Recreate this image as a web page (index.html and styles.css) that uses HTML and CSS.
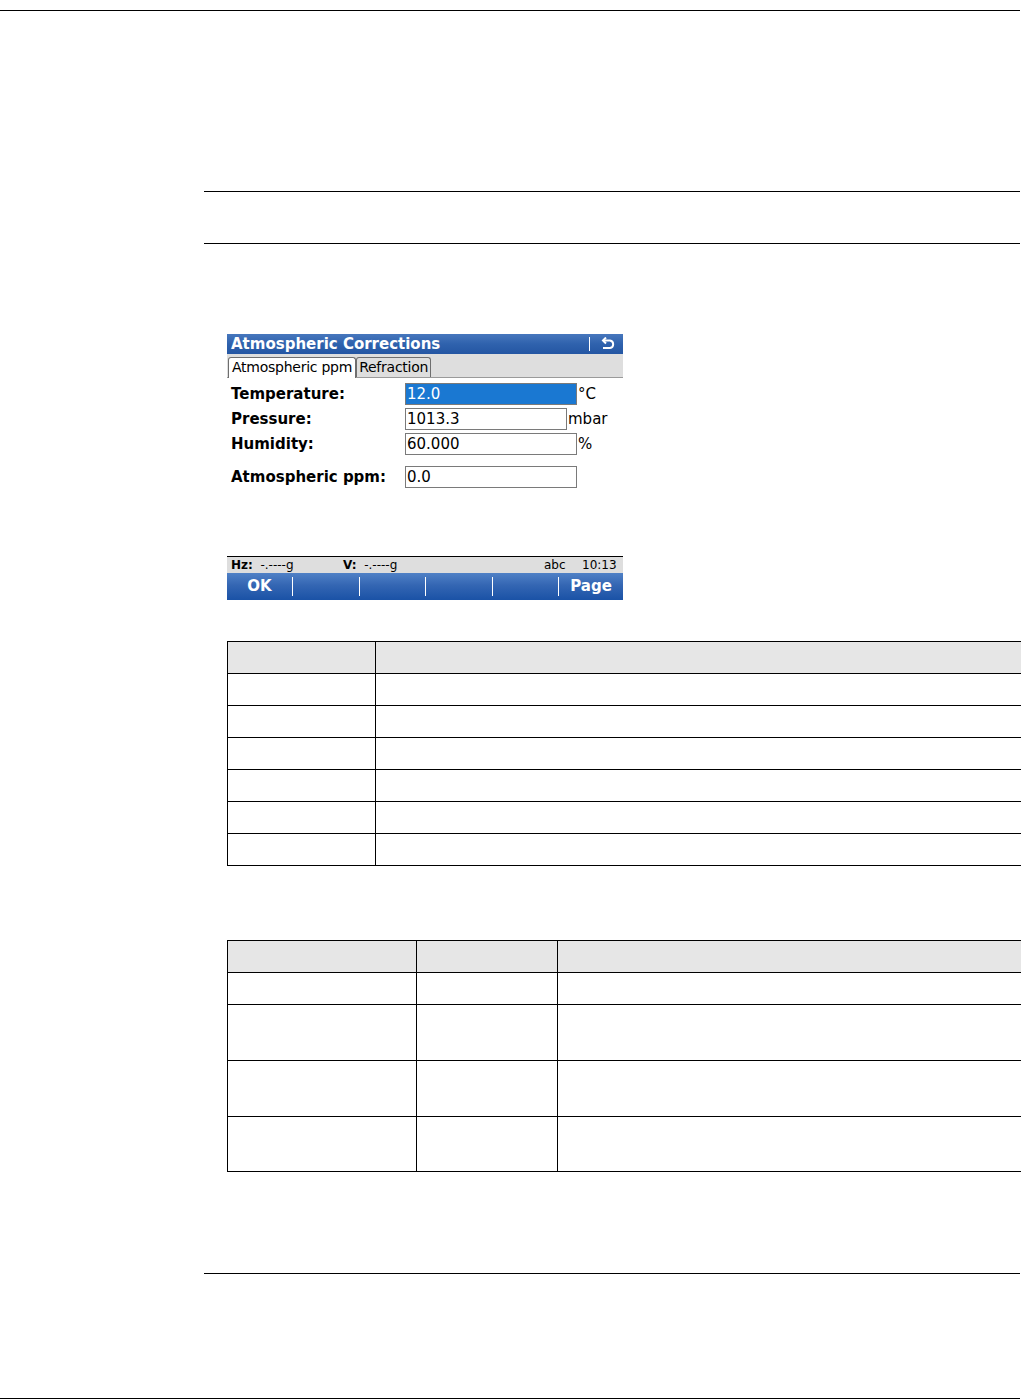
FILE: index.html
```html
<!DOCTYPE html>
<html lang="en">

<head>
    <meta charset="UTF-8">
    <title>Atmospheric Corrections</title>
    <link rel="stylesheet" href="styles.css">
</head>

<body>
    <div class="top-rule"></div>

    <div class="content">
        <div class="rule rule-a"></div>
        <div class="rule rule-b"></div>

        <!-- device screen -->
        <div class="screen">
            <div class="title-bar">
                <span class="title">Atmospheric Corrections</span>
                <span class="title-sep"></span>
                <svg class="back-icon" width="16" height="14" viewBox="0 0 16 14">
                    <path d="M3 3.5 H10 A3.8 3.8 0 0 1 10 11 H3" fill="none" stroke="#fff" stroke-width="2"/>
                    <path d="M6 0.5 L3 3.5 L6 6.5" fill="none" stroke="#fff" stroke-width="2"/>
                </svg>
            </div>
            <div class="tabs">
                <span class="tab active">Atmospheric ppm</span>
                <span class="tab">Refraction</span>
            </div>
            <div class="form">
                <div class="row">
                    <span class="label">Temperature:</span>
                    <span class="field selected">12.0</span>
                    <span class="unit">°C</span>
                </div>
                <div class="row">
                    <span class="label">Pressure:</span>
                    <span class="field short">1013.3</span>
                    <span class="unit">mbar</span>
                </div>
                <div class="row">
                    <span class="label">Humidity:</span>
                    <span class="field">60.000</span>
                    <span class="unit">%</span>
                </div>
                <div class="row row-gap">
                    <span class="label">Atmospheric ppm:</span>
                    <span class="field">0.0</span>
                </div>
            </div>
            <div class="status-bar">
                <span class="hz"><b>Hz:</b>&nbsp; -.----g</span>
                <span class="v"><b>V:</b>&nbsp; -.----g</span>
                <span class="abc">abc</span>
                <span class="clock">10:13</span>
            </div>
            <div class="soft-keys">
                <span class="key">OK</span>
                <span class="key"></span>
                <span class="key"></span>
                <span class="key"></span>
                <span class="key"></span>
                <span class="key">Page</span>
            </div>
        </div>

        <table class="grid grid-one">
            <colgroup>
                <col style="width: 148px">
                <col>
            </colgroup>
            <tr class="head"><td></td><td></td></tr>
            <tr><td></td><td></td></tr>
            <tr><td></td><td></td></tr>
            <tr><td></td><td></td></tr>
            <tr><td></td><td></td></tr>
            <tr><td></td><td></td></tr>
            <tr><td></td><td></td></tr>
        </table>

        <table class="grid grid-two">
            <colgroup>
                <col style="width: 189px">
                <col style="width: 141px">
                <col>
            </colgroup>
            <tr class="head"><td></td><td></td><td></td></tr>
            <tr><td></td><td></td><td></td></tr>
            <tr class="tall"><td></td><td></td><td></td></tr>
            <tr class="tall"><td></td><td></td><td></td></tr>
            <tr class="tall last"><td></td><td></td><td></td></tr>
        </table>

        <div class="rule rule-c"></div>
    </div>

    <div class="bottom-rule"></div>
</body>

</html>
```

FILE: styles.css
```css
* {
    box-sizing: border-box;
    margin: 0;
    padding: 0;
}

html,
body {
    overflow: hidden;
}

body {
    width: 1021px;
    height: 1400px;
    background: #fff;
    color: #000;
    font-family: "DejaVu Sans", Verdana, sans-serif;
}

.top-rule {
    margin-top: 10px;
    width: 1020px;
    border-top: 1px solid #000;
}

.content {
    margin-left: 204px;
}

.rule {
    width: 816px;
    border-top: 1px solid #000;
}

.rule-a {
    margin-top: 180px;
}

.rule-b {
    margin-top: 51px;
}

.rule-c {
    margin-top: 101px;
}

.bottom-rule {
    margin-top: 124px;
    width: 1020px;
    border-top: 1px solid #000;
}

/* device screen */

.screen {
    margin: 90px 0 0 23px;
    width: 396px;
    height: 266px;
    display: flex;
    flex-direction: column;
    background: #fff;
}

.title-bar {
    height: 20px;
    display: flex;
    align-items: center;
    padding: 0 7px 0 4px;
    background: linear-gradient(to bottom, #4777bd 0%, #2f62ad 50%, #2456a3 100%);
    color: #fff;
}

.title {
    flex: 1;
    font-size: 15px;
    font-weight: bold;
    line-height: 20px;
}

.title-sep {
    width: 1px;
    height: 14px;
    background: #fff;
    margin-right: 10px;
}

.back-icon {
    display: block;
}

.tabs {
    height: 24px;
    display: flex;
    align-items: flex-end;
    padding-left: 1px;
    background: #dedede;
    border-bottom: 1px solid #9a9a9a;
}

.tab {
    height: 20px;
    padding: 0 2px;
    font-size: 14px;
    letter-spacing: -0.25px;
    line-height: 19px;
    border: 1px solid #6e6e6e;
    border-bottom: none;
    border-radius: 3px 3px 0 0;
    background: #dedede;
}

.tab.active {
    height: 21px;
    background: #fff;
    margin-bottom: -1px;
    padding: 0 3px;
}

.form {
    flex: 1;
    padding: 5px 0 0 4px;
}

.row {
    display: flex;
    align-items: center;
    height: 22px;
    margin-bottom: 3px;
}

.row-gap {
    margin-top: 11px;
}

.label {
    width: 174px;
    font-size: 15px;
    font-weight: bold;
}

.field {
    width: 172px;
    height: 22px;
    padding-left: 1px;
    font-size: 15px;
    line-height: 20px;
    border: 1px solid #7a7a7a;
}

.field.short {
    width: 162px;
}

.field.selected {
    background: #1a78d2;
    color: #fff;
}

.unit {
    padding-left: 1px;
    font-size: 15px;
}

.status-bar {
    height: 17px;
    border-top: 1px solid #000;
    background: #dedede;
    font-size: 12px;
    line-height: 16px;
    display: flex;
}

.status-bar b {
    font-weight: bold;
}

.hz {
    padding-left: 4px;
    width: 116px;
}

.v {
    flex: 1;
}

.abc {
    width: 38px;
}

.clock {
    width: 41px;
}

.soft-keys {
    height: 27px;
    display: grid;
    grid-template-columns: 65px 67px 66px 67px 66px 65px;
    align-items: center;
    background: linear-gradient(to bottom, #5081c6 0%, #3466b3 45%, #1a52a6 100%);
    color: #fff;
    font-size: 15px;
    font-weight: bold;
}

.key {
    height: 19px;
    line-height: 19px;
    text-align: center;
    border-left: 1px solid #fff;
}

.key:first-child {
    border-left: none;
}

/* tables */

.grid {
    margin-left: 23px;
    width: 795px;
    border-collapse: collapse;
    table-layout: fixed;
}

.grid td {
    border: 1px solid #000;
}

.grid tr {
    height: 32px;
}

.grid tr.head td {
    background: #e6e6e6;
}

.grid tr.tall {
    height: 56px;
}

.grid tr.last {
    height: 55px;
}

.grid-one {
    margin-top: 41px;
}

.grid-two {
    margin-top: 74px;
}

.grid-two tr:not(.head) td + td + td {
    border-left: 1px solid #888;
}
```
